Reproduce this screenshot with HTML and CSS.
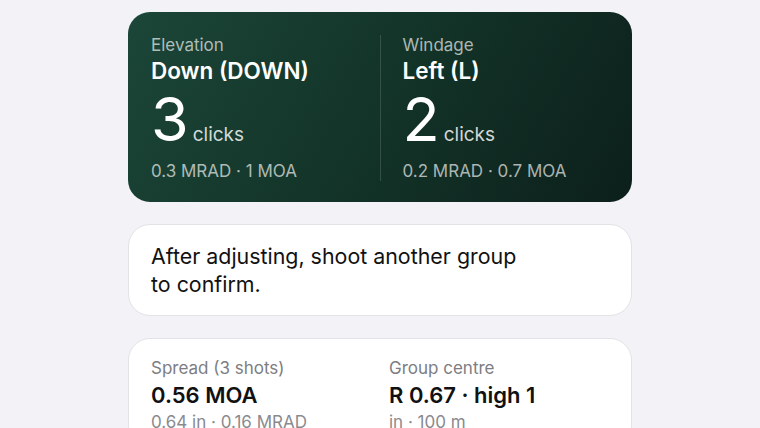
FILE: index.html
```html
<!DOCTYPE html>
<html>
<head>
<meta charset="utf-8">
<link rel="stylesheet" href="styles.css">
</head>
<body>
<main class="stack">
  <section class="card card-dark">
    <div class="col">
      <div class="label">Elevation</div>
      <div class="dir">Down (DOWN)</div>
      <div class="count"><span class="num">3</span><span class="unit">clicks</span></div>
      <div class="sub">0.3 MRAD · 1 MOA</div>
    </div>
    <div class="divider"></div>
    <div class="col">
      <div class="label">Windage</div>
      <div class="dir">Left (L)</div>
      <div class="count"><span class="num">2</span><span class="unit">clicks</span></div>
      <div class="sub">0.2 MRAD · 0.7 MOA</div>
    </div>
  </section>
  <section class="card card-light note">
    <p>After adjusting, shoot another group<br>to confirm.</p>
  </section>
  <section class="card card-light stats">
    <div class="stat">
      <div class="s-label">Spread (3 shots)</div>
      <div class="s-value">0.56 MOA</div>
      <div class="s-sub">0.64 in · 0.16 MRAD</div>
    </div>
    <div class="stat">
      <div class="s-label">Group centre</div>
      <div class="s-value">R 0.67 · high 1</div>
      <div class="s-sub">in · 100 m</div>
    </div>
  </section>
</main>
</body>
</html>
```
FILE: styles.css
```css
* { box-sizing: border-box; }
html, body { margin: 0; padding: 0; }
body {
  background: #f2f2f7;
  font-family: Inter, "Noto Sans", "Liberation Sans", sans-serif;
  width: 760px;
  height: 428px;
  overflow: hidden;
}
.stack {
  width: 504px;
  margin: 0 auto;
  padding-top: 12px;
  display: flex;
  flex-direction: column;
  gap: 22px;
}
.card { border-radius: 22px; }
.card-dark {
  height: 190px;
  background: linear-gradient(120deg, #1b4638 0%, #133428 50%, #0c1f1b 100%);
  color: #fff;
  display: grid;
  grid-template-columns: 1fr 1px 1fr;
  column-gap: 22px;
  padding: 23px 23px 21px;
}
.divider { background: rgba(255,255,255,0.14); }
.col { display: flex; flex-direction: column; }
.label { font-size: 17px; line-height: 20px; color: rgba(255,255,255,0.66); }
.dir { font-size: 22.5px; line-height: 26px; font-weight: 600; margin-top: 3px; }
.count { display: flex; align-items: baseline; margin-top: 4px; height: 62px; }
.num { font-size: 61px; line-height: 62px; font-weight: 400; letter-spacing: -1px; }
.unit { font-size: 19px; color: rgba(255,255,255,0.82); margin-left: 5px; }
.sub { font-size: 17px; line-height: 20px; color: rgba(255,255,255,0.66); margin-top: 11px; }
.card-light { background: #fff; border: 1px solid #e2e2e7; }
.note { height: 92px; padding: 17px 22px; }
.note p { margin: 0; font-size: 21.4px; line-height: 28px; color: #111; }
.stats {
  height: 110px;
  display: grid;
  grid-template-columns: 1fr 1fr;
  column-gap: 18px;
  padding: 19px 22px;
}
.s-label { font-size: 17px; line-height: 20px; color: #7d7d82; }
.s-value { font-size: 22px; line-height: 30px; font-weight: 600; color: #111; margin-top: 2px; }
.s-sub { font-size: 17px; line-height: 20px; color: #8a8a8f; margin-top: 2px; }
```
